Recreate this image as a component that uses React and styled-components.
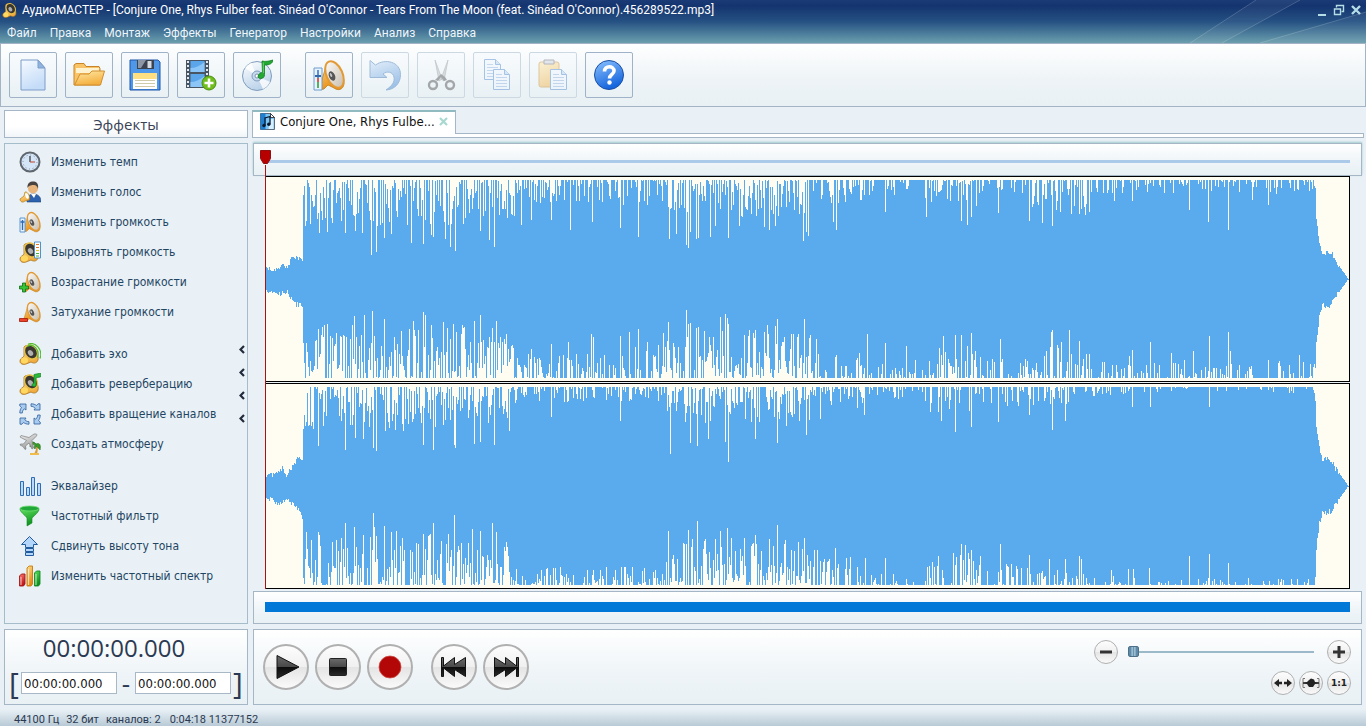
import React, { useState } from 'react';
import styled, { createGlobalStyle } from 'styled-components';

const MENU = ['Файл', 'Правка', 'Монтаж', 'Эффекты', 'Генератор', 'Настройки', 'Анализ', 'Справка'];

const TITLE =
  "АудиоМАСТЕР - [Conjure One, Rhys Fulber feat. Sinéad O'Connor - Tears From The Moon (feat. Sinéad O'Connor).456289522.mp3]";

export default function App() {
  const [zoom, setZoom] = useState(0);

  return (
    <Window>
      <GlobalStyle />
      <SharedDefs />
      <Header>
        <Rays viewBox="0 0 180 43">
          <path d="M4 43 70 0h44L36 43z" fill="#fff" opacity="0.050" />
          <path d="M4 43 70 0M36 43 114 0M74 43 180 12" fill="none" stroke="#fff" opacity="0.180" />
          <path d="M74 43 180 12v31z" fill="#fff" opacity="0.060" />
        </Rays>
        <TitleBar>
          <Small viewBox="0 0 22 22" $size={16}>
            <DarkSpeaker />
          </Small>
          <Title>{TITLE}</Title>
          <WindowButtons />
        </TitleBar>
        <Menu>
          {MENU.map((item) => (
            <MenuItem key={item}>{item}</MenuItem>
          ))}
        </Menu>
      </Header>

      <Toolbar>
        {TOOLS.map(({ label, Icon, disabled, first }) => (
          <ToolButton key={label} aria-label={label} disabled={disabled} $first={first}>
            <svg width="32" height="32" viewBox="0 0 32 32">
              <Icon />
            </svg>
          </ToolButton>
        ))}
      </Toolbar>

      <Body>
        <Sidebar>
          <SidebarTitle>Эффекты</SidebarTitle>
          <EffectsPanel>
            {EFFECTS.map((group) => (
              <EffectGroup key={group[0].label}>
                {group.map(({ label, Icon }) => (
                  <li key={label}>
                    <Effect>
                      <Small viewBox="0 0 22 22" $size={22}>
                        <Icon />
                      </Small>
                      {label}
                    </Effect>
                  </li>
                ))}
              </EffectGroup>
            ))}
            <Collapse aria-label="Свернуть панель">
              {[0, 1, 2, 3].map((i) => (
                <svg key={i} width="6" height="9" viewBox="0 0 6 9">
                  <path d="M5 1 1.5 4.500 5 8" fill="none" stroke="#222a3c" strokeWidth="2.200" />
                </svg>
              ))}
            </Collapse>
          </EffectsPanel>
          <TimePanel>
            <Clock>00:00:00.000</Clock>
            <Range>
              <Bracket>[</Bracket>
              <TimeInput aria-label="Начало выделения" defaultValue="00:00:00.000" />
              <Dash>-</Dash>
              <TimeInput aria-label="Конец выделения" defaultValue="00:00:00.000" />
              <Bracket>]</Bracket>
            </Range>
          </TimePanel>
        </Sidebar>

        <Main>
          <TabBar>
            <Tab>
              <TabIcon />
              Conjure One, Rhys Fulbe...
              <TabClose aria-label="Закрыть">
                <svg width="9" height="9" viewBox="0 0 9 9">
                  <path d="M1 1 8 8M8 1 1 8" stroke="#a9d8d0" strokeWidth="2.200" />
                </svg>
              </TabClose>
            </Tab>
            <TabStrip />
          </TabBar>

          <Editor>
            <Ruler>
              <RulerLine />
            </Ruler>
            <Track channel={CHANNELS[0]} />
            <Track channel={CHANNELS[1]} />
            <Playhead>
              <svg width="11" height="15" viewBox="0 0 11 15">
                <path d="M.5 .5h10v8l-3 5h-4l-3-5z" fill="#b80000" stroke="#8c1010" />
              </svg>
            </Playhead>
          </Editor>

          <ScrollPanel>
            <ScrollBar />
          </ScrollPanel>

          <Controls>
            <Transport>
              {TRANSPORT.map(({ label, Icon, first }) => (
                <RoundButton key={label} aria-label={label} $size={46} $first={first}>
                  <svg width="32" height="32" viewBox="0 0 32 32">
                    <Icon />
                  </svg>
                </RoundButton>
              ))}
            </Transport>
            <ZoomBox>
              <ZoomRow>
                <RoundButton aria-label="Уменьшить" $size={24} onClick={() => setZoom(Math.max(0, zoom - 10))}>
                  <svg width="14" height="14" viewBox="0 0 14 14">
                    <path d="M1 5.500h12v3H1z" fill="#333" />
                  </svg>
                </RoundButton>
                <ZoomSlider
                  type="range"
                  aria-label="Масштаб"
                  value={zoom}
                  onChange={(e) => setZoom(Number(e.target.value))}
                />
                <RoundButton aria-label="Увеличить" $size={24} onClick={() => setZoom(Math.min(100, zoom + 10))}>
                  <svg width="14" height="14" viewBox="0 0 14 14">
                    <path d="M1 5.500h4.500V1h3v4.500H13v3H8.500V13h-3V8.500H1z" fill="#333" />
                  </svg>
                </RoundButton>
              </ZoomRow>
              <ZoomRow $tight>
                <RoundButton aria-label="По ширине" $size={24}>
                  <svg width="18" height="10" viewBox="0 0 18 10">
                    <path d="M0 5 5 1v2.800h3v2.400H5V9zM18 5l-5-4v2.800h-3v2.400h3V9z" fill="#222" />
                  </svg>
                </RoundButton>
                <RoundButton aria-label="Выделение" $size={24}>
                  <svg width="18" height="10" viewBox="0 0 18 10">
                    <path d="M3 .5H1v9h2M15 .5h2v9h-2" fill="none" stroke="#777" />
                    <path d="M1 4.300 5 4l2-2 2-1.500L12 1.500 13 4l4 .300v1.400L13 6l-2 3H7L5 6l-4-.3z" fill="#222" />
                  </svg>
                </RoundButton>
                <RoundButton $size={24}>1:1</RoundButton>
              </ZoomRow>
            </ZoomBox>
          </Controls>
        </Main>
      </Body>

      <StatusBar>
        <span>44100 Гц</span>
        <span>32 бит</span>
        <span>каналов: 2</span>
        <StatusTime>0:04:18 11377152</StatusTime>
      </StatusBar>
    </Window>
  );
}

/* ---------- waveform ---------- */

const LENGTH = 1084;
const PEAK = 99;
const START = 38;
const END = 1050;

// [x, share of columns with a gap, gap depth above, gap depth below]
const DENSITY = [
  [
    [0, 0.78, 46, 54],
    [200, 0.72, 40, 46],
    [250, 0.55, 24, 26],
    [340, 0.55, 28, 34],
    [395, 0.8, 38, 48],
    [545, 0.55, 24, 30],
    [600, 0.35, 16, 18],
    [660, 0.55, 26, 32],
    [715, 0.4, 20, 22],
    [765, 0.6, 34, 34],
    [826, 0.35, 14, 16],
  ],
  [
    [0, 0.78, 44, 54],
    [200, 0.75, 36, 44],
    [245, 0.5, 16, 18],
    [400, 0.78, 36, 48],
    [545, 0.55, 22, 30],
    [600, 0.3, 12, 14],
    [660, 0.55, 26, 34],
    [715, 0.4, 20, 22],
    [805, 0.3, 9, 12],
    [860, 0.25, 6, 7],
  ],
];

const CHANNELS = [
  {
    seed: 17,
    density: DENSITY[0],
    top: {
      lead: [[0, 10], [12, 9], [16, 15], [22, 11], [27, 22], [38, 19]],
      dips: [
        [40, 46], [54, 53], [62, 52], [67, 43], [80, 53], [90, 51], [97, 53], [106, 75], [111, 72], [119, 58],
        [126, 54], [146, 63], [158, 64], [166, 55], [168, 57], [180, 59], [185, 67], [190, 71], [215, 51],
        [224, 60], [229, 67], [256, 45], [266, 40], [286, 40], [305, 50], [327, 42], [355, 48], [373, 57],
        [404, 59], [411, 54], [421, 65], [423, 68], [425, 52], [431, 59], [433, 58], [445, 57], [450, 46],
        [463, 58], [474, 46], [499, 47], [504, 50], [510, 46], [538, 61], [541, 52], [543, 56], [568, 42],
        [571, 50], [620, 32], [661, 37], [696, 41], [702, 45], [706, 37], [733, 33], [764, 41], [777, 43],
        [787, 46], [806, 34], [820, 35], [824, 32], [849, 21], [867, 21], [924, 30], [943, 42], [963, 50],
        [987, 20], [1003, 25],
      ],
    },
    bottom: {
      lead: [[0, 12], [14, 14], [22, 12], [28, 24], [38, 27]],
      dips: [
        [53, 49], [57, 51], [89, 62], [99, 63], [107, 67], [119, 59], [148, 57], [158, 66], [160, 63],
        [178, 56], [188, 54], [197, 53], [209, 57], [215, 63], [231, 57], [227, 50], [241, 44], [266, 29],
        [286, 34], [303, 36], [326, 44], [328, 41], [355, 42], [364, 46], [373, 49], [382, 36], [403, 56],
        [421, 68], [423, 54], [425, 55], [431, 50], [433, 51], [455, 61], [460, 64], [462, 60], [463, 54],
        [479, 43], [484, 48], [490, 48], [499, 46], [502, 53], [510, 52], [512, 59], [519, 41], [533, 44],
        [539, 59], [545, 43], [551, 39], [602, 44], [620, 35], [641, 32], [678, 42], [690, 43], [696, 43],
        [706, 45], [735, 39], [786, 46], [787, 48], [796, 36], [804, 48], [814, 37], [864, 22], [867, 28],
        [885, 36], [906, 25], [919, 18], [928, 27], [944, 42], [963, 46], [965, 27], [1003, 18], [1014, 17],
        [1034, 23],
      ],
    },
  },
  {
    seed: 91,
    density: DENSITY[1],
    top: {
      lead: [[0, 10], [10, 12], [17, 17], [21, 11], [30, 23], [34, 29], [38, 26]],
      dips: [
        [40, 39], [53, 59], [80, 63], [90, 51], [98, 52], [108, 61], [111, 64], [158, 58], [168, 63],
        [189, 58], [190, 61], [209, 57], [215, 55], [229, 58], [244, 44], [286, 30], [355, 34], [405, 67],
        [425, 56], [432, 59], [443, 52], [460, 55], [463, 75], [490, 52], [512, 56], [521, 39], [541, 48],
        [555, 32], [599, 28], [676, 34], [690, 45], [706, 40], [733, 35], [764, 28], [787, 43], [800, 34],
        [867, 20], [885, 20], [944, 20],
      ],
    },
    bottom: {
      lead: [[0, 10], [14, 18], [22, 13], [30, 20], [36, 27], [38, 36]],
      dips: [
        [53, 53], [54, 50], [67, 43], [80, 62], [89, 58], [98, 50], [108, 72], [109, 58], [119, 59],
        [131, 54], [158, 51], [168, 62], [183, 51], [189, 70], [207, 56], [215, 54], [227, 62], [231, 53],
        [241, 43], [403, 54], [423, 55], [432, 64], [440, 46], [455, 54], [462, 57], [479, 47], [490, 50],
        [512, 60], [519, 41], [539, 47], [549, 35], [552, 35], [570, 37], [600, 27], [620, 27], [673, 29],
        [696, 41], [700, 40], [706, 35], [715, 29], [735, 41], [764, 30], [784, 26], [800, 26], [814, 29],
        [816, 26], [846, 15], [863, 16], [868, 16], [884, 17], [924, 29], [944, 31], [963, 22],
      ],
    },
  },
];

const TAIL = [[1050, 88], [1051, 62], [1054, 38], [1057, 27], [1066, 26], [1070, 18], [1078, 7], [1083, 0]];

function random(seed) {
  let state = seed;
  return () => {
    state = (state * 16807) % 2147483647;
    return state / 2147483647;
  };
}

function interpolate(points, x) {
  const next = points.findIndex(([px]) => px >= x);
  if (next < 0) return points[points.length - 1][1];
  if (next === 0) return points[0][1];
  const [x0, y0] = points[next - 1];
  const [x1, y1] = points[next];
  return y0 + ((y1 - y0) * (x - x0)) / (x1 - x0);
}

function levels({ lead, dips }, density, column, next) {
  const deep = new Map(dips);
  return Array.from({ length: LENGTH }, (_, x) => {
    const r = next();
    const depth = next();
    if (x < START) return Math.round(interpolate(lead, x) + r * 5 - 2);
    if (x >= END) return Math.round(interpolate(TAIL, x) + (x < 1074 ? r * 6 - 3 : 0));
    if (deep.has(x)) return PEAK - deep.get(x);
    const zone = density.filter(([from]) => from <= x).pop();
    return r < zone[1] ? PEAK - Math.round(depth ** 1.4 * zone[column]) : PEAK;
  });
}

function wavePath({ seed, density, top, bottom }) {
  const next = random(seed * 7919);
  const up = levels(top, density, 2, next);
  const down = levels(bottom, density, 3, next);
  return up.map((h, x) => `M${x} ${PEAK - h}h1v${Math.max(1, h + down[x])}h-1z`).join('');
}

function Track({ channel }) {
  return (
    <TrackBox>
      <Wave viewBox={`0 0 ${LENGTH} ${PEAK * 2}`} preserveAspectRatio="none" shapeRendering="crispEdges">
        <path d={wavePath(channel)} fill="#5aabee" />
      </Wave>
    </TrackBox>
  );
}

/* ---------- icons ---------- */

const GRADIENTS = {
  gPaper: ['#f6faff', '#c4dcf8'],
  gGold: ['#fff0a8', '#f0a93c'],
  gFolder: ['#ffe9a6', '#f4b040'],
  gCone: ['#ffffff', '#cfc6b8'],
  gGreen: ['#5fe05f', '#0b8f1c'],
  gDisc: ['#ffffff', '#bcd3ea'],
  gUndo: ['#cfe3f8', '#3f86d6'],
  gHelp: ['#8cc2ff', '#1566dd'],
  gRed: ['#ff7a70', '#c01414'],
  gOrange: ['#ffe08a', '#e88a10'],
  gMetal: ['#f2f2f2', '#9a9a9a'],
};

function SharedDefs() {
  return (
    <DefsSvg aria-hidden="true">
      <defs>
        {Object.entries(GRADIENTS).map(([id, [from, to]]) => (
          <linearGradient key={id} id={id} x1="0" y1="0" x2="0.400" y2="1">
            <stop offset="0" stopColor={from} />
            <stop offset="1" stopColor={to} />
          </linearGradient>
        ))}
        <linearGradient id="gGlyph" x1="0" y1="0" x2="0" y2="1">
          <stop offset="0" stopColor="#6a6a6a" />
          <stop offset="0.500" stopColor="#484848" />
          <stop offset="0.520" stopColor="#0c0c0c" />
          <stop offset="1" stopColor="#2a2a2a" />
        </linearGradient>
      </defs>
    </DefsSvg>
  );
}

const NewIcon = () => (
  <>
    <path d="M4 1h17l7 8v22H4z" fill="url(#gPaper)" stroke="#7d9cc8" />
    <path d="M21 1v8h7z" fill="#8fb4e0" stroke="#7d9cc8" strokeLinejoin="round" />
  </>
);

const OpenIcon = () => (
  <>
    <path d="M1 26V6l2-1.500h8l2 3h13l1 2V26z" fill="#f9c468" stroke="#c98328" />
    <path d="M3 9h23v5H3z" fill="#fff3cf" />
    <path d="M1.500 26 7 15h9l3-3h12.500l-4 14z" fill="url(#gFolder)" stroke="#d18e2e" strokeLinejoin="round" />
  </>
);

const SaveIcon = () => (
  <>
    <path d="M1 1h28l2 2v28H1z" fill="#4f97e8" stroke="#1c55a8" />
    <path d="M8 1h17v9H8z" fill="#3b4250" />
    <path d="M9 1h8l-5 8H9z" fill="#8c96a4" />
    <path d="M18.500 2h4v7h-4z" fill="#d6dbe2" />
    <path d="M4 14h24v16H4z" fill="#fff" />
    <path d="M4 14h24v6H4z" fill="#ffdf80" />
    <path d="M6 21.500h20M6 24.500h20M6 27.500h20" stroke="#cfcaa8" />
  </>
);

const FilmIcon = () => (
  <>
    <path d="M1 1h23v28H1z" fill="#4a5563" />
    <path d="M3 2v26M22 2v26" stroke="#e3e9f0" strokeWidth="2" strokeDasharray="2 2" />
    <path d="M5.500 2h14v11h-14zM5.500 15h14v13h-14z" fill="#5ba6ea" />
    <path d="M5.500 9c5 0 9-2 14-6v10h-14zM5.500 23c5 0 9-2 14-6v11h-14z" fill="#8cc6f8" />
    <circle cx="24" cy="24" r="7" fill="#6fbe1c" stroke="#4b8f12" />
    <path d="M24 19.500v9M19.500 24h9" stroke="#fff" strokeWidth="2.600" />
  </>
);

const DiscIcon = () => (
  <>
    <circle cx="16" cy="17" r="14.500" fill="url(#gDisc)" stroke="#7f9dbd" />
    <path d="M16 17 4 9a14 14 0 0 1 6-5zM16 17l13 6a14 14 0 0 1-7 7z" fill="#fff" opacity="0.800" />
    <circle cx="16" cy="17" r="5" fill="#c4d8ee" stroke="#7f9dbd" />
    <circle cx="16" cy="17" r="2" fill="#fff" stroke="#7f93ad" />
    <path
      d="M21 2c3 .8 7 .3 11-1-.5 3.500-3 5-8.500 5v9.500c0 3-2 4-4 4-2.200 0-3-1.500-2-3.500s3-2.500 4-2.500z"
      fill="#23a834"
      stroke="#0c7d1e"
      strokeWidth="0.800"
    />
    <path d="M22.300 3.500V14" stroke="#7be37b" strokeWidth="0.800" />
  </>
);

// Light cone speaker on a 32 grid
const Cone = () => (
  <>
    <path d="M7 27 11 14l3-10c4-5 18 10 17 21-1 6-6 7-10 4l-6-3-4 4c-3 1-5-1-4-3z" fill="url(#gOrange)" stroke="#c07f1c" strokeWidth="0.800" />
    <ellipse
      cx="21.500"
      cy="15.500"
      rx="8"
      ry="14"
      transform="rotate(-24 21.500 15.500)"
      fill="url(#gCone)"
      stroke="#e39a35"
      strokeWidth="2"
    />
    <ellipse cx="19" cy="17" rx="3" ry="5" transform="rotate(-24 19 17)" fill="#565656" />
    <ellipse cx="18" cy="16" rx="1" ry="2.200" transform="rotate(-24 18 16)" fill="#c4c4c4" />
  </>
);

const VolumeIcon = () => (
  <>
    <Cone />
    <path d="M1 9h8v22H1z" fill="#e8f3ff" stroke="#6f9ccc" />
    <path d="M5 11v8" stroke="#3b78c8" strokeWidth="1.600" />
    <path d="M5 19v4" stroke="#d43a1e" strokeWidth="1.600" />
    <path d="M5 23v6" stroke="#35a032" strokeWidth="1.600" />
    <path d="M2 17h6" stroke="#3468a8" strokeWidth="2" />
  </>
);

const UndoIcon = () => (
  <path
    d="M1 1.500 6.500 6c10-7 25-3 25 9.500 0 9-6 15-14.500 15.500 6-4 9-8 8-13-1-5-7-6.500-11-3l4 3.500H1z"
    fill="url(#gUndo)"
    stroke="#3c74b4"
  />
);

const CutIcon = () => (
  <>
    <path d="M10 1l7 19-3 2zM23 1l-7 19 3 2z" fill="#b9bec4" stroke="#777" strokeWidth="0.600" />
    <path d="M13 18l3-3 4 3 2 3-3 1-3-4-3 4-3-1z" fill="#4c4c4c" />
    <circle cx="8" cy="26" r="4" fill="none" stroke="#4c4c4c" strokeWidth="2.400" />
    <circle cx="25" cy="26" r="4" fill="none" stroke="#4c4c4c" strokeWidth="2.400" />
  </>
);

const Sheet = ({ x, y }) => (
  <g transform={`translate(${x} ${y})`}>
    <path d="M.5 .5h11l5 5v15H.5z" fill="#f0f7ff" stroke="#4a86cc" />
    <path d="M11.500 .5v5h5" fill="#b8d4f2" stroke="#4a86cc" />
    <path d="M3 5.500h6M3 8.500h11M3 11.500h11M3 14.500h11M3 17.500h11" stroke="#8bb2e0" />
  </g>
);

const CopyIcon = () => (
  <>
    <Sheet x={3} y={0} />
    <Sheet x={12} y={10} />
  </>
);

const PasteIcon = () => (
  <>
    <rect x="2" y="3" width="20" height="25" rx="2" fill="url(#gFolder)" stroke="#c98a30" />
    <path d="M7 5V1h10v4z" fill="#ccd2da" stroke="#667" />
    <Sheet x={13} y={10} />
  </>
);

const HelpIcon = () => (
  <>
    <circle cx="16" cy="16" r="14.500" fill="url(#gHelp)" stroke="#1a4fa6" />
    <path d="M11.500 12.500c0-6.500 9.500-6 9.500-.5 0 3.500-4.500 3.500-4.500 7.500" fill="none" stroke="#fff" strokeWidth="3.600" />
    <circle cx="16.500" cy="23.500" r="2.200" fill="#fff" />
  </>
);

const TOOLS = [
  { label: 'Создать', Icon: NewIcon },
  { label: 'Открыть', Icon: OpenIcon },
  { label: 'Сохранить', Icon: SaveIcon },
  { label: 'Звук из видео', Icon: FilmIcon },
  { label: 'Звук с диска', Icon: DiscIcon },
  { label: 'Громкость', Icon: VolumeIcon, first: true },
  { label: 'Отменить', Icon: UndoIcon, disabled: true },
  { label: 'Вырезать', Icon: CutIcon, disabled: true },
  { label: 'Копировать', Icon: CopyIcon, disabled: true },
  { label: 'Вставить', Icon: PasteIcon, disabled: true },
  { label: 'Помощь', Icon: HelpIcon },
];

const ClockIcon = () => (
  <>
    <circle cx="11" cy="11" r="9.500" fill="#d5e5f8" stroke="#5f666e" strokeWidth="2" />
    <circle cx="11" cy="11" r="7" fill="none" stroke="#7e8b99" strokeDasharray="1 2.660" />
    <path d="M11 5v6" stroke="#333" strokeWidth="1.200" />
    <path d="M11 11h5" stroke="#c55a4a" strokeWidth="1.200" />
  </>
);

const VoiceIcon = () => (
  <>
    <path d="M8 21c0-6 3-8 6-8s8 1 8 8z" fill="#2d62ae" stroke="#1f4680" strokeWidth="0.600" />
    <path d="M12 13h5l-2 4z" fill="#fff" />
    <circle cx="14" cy="7.500" r="5" fill="#e9b47c" />
    <path d="M8.500 7C8 2 11 .5 14 .5S20 2 19 8c-1-3-2-4-4-4s-5 0-6.500 3z" fill="#4a4340" />
    <path d="M1 18l4-3 1-4c3-1 6 6 4 8l-4 1c-2 2-5 1-5-2z" fill="url(#gGold)" stroke="#b07a1e" strokeWidth="0.700" />
    <ellipse cx="8" cy="15" rx="1.500" ry="3" transform="rotate(-25 8 15)" fill="#fff" />
  </>
);

const SmallCone = () => (
  <g transform="scale(0.680)">
    <Cone />
  </g>
);

const SmallVolume = () => (
  <>
    <SmallCone />
    <path d="M1 7h5v14H1z" fill="#e8f3ff" stroke="#5c96cf" />
    <path d="M3.500 9v10M1.500 11h4" stroke="#2f6cb4" strokeWidth="1.400" />
  </>
);

const DarkSpeaker = () => (
  <>
    <path d="M1 18c0-3 3-3 4-5L5 4c3-5 16 4 14 13-1 3-4 4-7 2l-5 2c-3 1-6 0-6-3z" fill="url(#gGold)" stroke="#a8741a" strokeWidth="0.800" />
    <ellipse cx="12" cy="9" rx="6" ry="7.500" transform="rotate(-35 12 9)" fill="#3a3630" stroke="#e8c14a" strokeWidth="1.400" />
    <ellipse cx="11.500" cy="10" rx="2.400" ry="3.200" transform="rotate(-35 11.500 10)" fill="#b0b0b0" />
    <ellipse cx="5.500" cy="17.500" rx="3.500" ry="3" fill="#ffd860" />
  </>
);

const LevelIcon = () => (
  <>
    <DarkSpeaker />
    <path d="M15.500 1h6v16h-6z" fill="#fff" stroke="#4f93cc" />
    <path d="M17 3.500h3M17 6.500h3" stroke="#e07828" strokeWidth="1.200" />
    <path d="M17 9.500h3" stroke="#e8c428" strokeWidth="1.200" />
    <path d="M17 12.500h3M17 15h3" stroke="#4cae3c" strokeWidth="1.200" />
  </>
);

const FadeInIcon = () => (
  <>
    <SmallCone />
    <path d="M3.500 12h3v3h3v3h-3v3h-3v-3h-3v-3h3z" fill="#37c237" stroke="#0e6f14" strokeWidth="0.800" />
  </>
);

const FadeOutIcon = () => (
  <>
    <SmallCone />
    <path d="M.5 17.500h8v3h-8z" fill="#f04028" stroke="#a01808" strokeWidth="0.800" />
  </>
);

const EchoIcon = () => (
  <>
    <DarkSpeaker />
    <path d="M8 3.500c7-4 13 4 10.500 11M9 1.200c8-3 15 6 12 14.300" fill="none" stroke="#55bb33" strokeWidth="1.200" />
  </>
);

const ReverbIcon = () => (
  <>
    <DarkSpeaker />
    <path d="M15 1.500 21.500 0v4l-4.500.8V12c0 2-4 2-4 0 0-1.500 2-1.800 2-1.800z" fill="#2cb83c" stroke="#0b7a1c" strokeWidth="0.600" />
  </>
);

const TURN = 'M.8 10c0-2.500.6-4 1.700-5.500L.8 3V1H7v6L5.200 5.800C4 7 3.300 8.500 3.300 10z';

const RotateIcon = () => (
  <g fill="#a9cbf0" stroke="#2d5f9c" strokeWidth="0.800">
    {[0, 90, 180, 270].map((angle) => (
      <path key={angle} d={TURN} transform={`rotate(${angle} 11 11)`} />
    ))}
  </g>
);

const AtmosphereIcon = () => (
  <>
    <path d="M16 11c2 3 1 7-1 10h3c1-4 1-7 0-10z" fill="#d89a3c" />
    <path d="M11 21h9" stroke="#f0bc4c" strokeWidth="2" />
    <path d="M17 11c-3-4-6-1-6 3 2-2 3-3 5-2-1 2-1 3 0 4 1-3 2-3 3-1 1 1 2 1 2 2 1-4 0-8-4-6z" fill="#3a9a28" stroke="#1c6c14" strokeWidth="0.600" />
    <path
      d="M17 1c1 0 1 1 .5 2L13 7.500 14.500 15 13 16l-3-6-3.500 3 .5 3-1 .5-2-3-3-1.500.5-1h3l3-3.500L1 4l1-1.500 8 2L15 1z"
      fill="url(#gMetal)"
      stroke="#7e7e7e"
      strokeWidth="0.700"
    />
  </>
);

const EqualizerIcon = () => (
  <g fill="#b9dafa" stroke="#2f6cb4">
    <path d="M1.500 6.500h3v14h-3zM7.500 12.500h3v8h-3zM12.500 2.500h3v18h-3zM18.500 8.500h3v12h-3z" />
  </g>
);

const FilterIcon = () => (
  <>
    <path d="M1 4c0 3 5 6 7 9v8l5-3v-5c3-3 7-6 7-9z" fill="url(#gGreen)" stroke="#168a28" strokeWidth="0.600" />
    <ellipse cx="10.500" cy="3.500" rx="9.500" ry="2.500" fill="#1fa838" stroke="#6fdc74" strokeWidth="0.800" />
  </>
);

const PitchIcon = () => (
  <g fill="#b4d6fa" stroke="#235c9c" strokeLinejoin="round">
    <path d="M10.500 1.500 18.500 9.500h-4v3h-8v-3h-4z" />
    <path d="M6.500 13.500h8v3h-8zM6.500 17.500h8v3h-8z" />
  </g>
);

const Pillar = ({ x, y, fill, dark }) => (
  <>
    <path d={`M${x} ${y + 2}l2-2h3.500v${19 - y}l-1.500 2H${x}z`} fill={fill} stroke={dark} strokeWidth="0.900" strokeLinejoin="round" />
    <path d={`M${x + 1.5} ${y + 3}V20`} stroke="#fff" strokeWidth="1.200" opacity="0.600" />
  </>
);

const SpectrumIcon = () => (
  <>
    <Pillar x={0.5} y={9} fill="url(#gRed)" dark="#a01818" />
    <Pillar x={8} y={1} fill="url(#gOrange)" dark="#c47a10" />
    <Pillar x={15.5} y={6} fill="url(#gGreen)" dark="#168a28" />
  </>
);

const EFFECTS = [
  [
    { label: 'Изменить темп', Icon: ClockIcon },
    { label: 'Изменить голос', Icon: VoiceIcon },
    { label: 'Изменить громкость', Icon: SmallVolume },
    { label: 'Выровнять громкость', Icon: LevelIcon },
    { label: 'Возрастание громкости', Icon: FadeInIcon },
    { label: 'Затухание громкости', Icon: FadeOutIcon },
  ],
  [
    { label: 'Добавить эхо', Icon: EchoIcon },
    { label: 'Добавить реверберацию', Icon: ReverbIcon },
    { label: 'Добавить вращение каналов', Icon: RotateIcon },
    { label: 'Создать атмосферу', Icon: AtmosphereIcon },
  ],
  [
    { label: 'Эквалайзер', Icon: EqualizerIcon },
    { label: 'Частотный фильтр', Icon: FilterIcon },
    { label: 'Сдвинуть высоту тона', Icon: PitchIcon },
    { label: 'Изменить частотный спектр', Icon: SpectrumIcon },
  ],
];

const PlayIcon = () => <path d="M7 4.500 29 16 7 27.500z" fill="url(#gGlyph)" stroke="#111" />;

const StopIcon = () => <rect x="7.500" y="7.500" width="17" height="17" rx="1" fill="url(#gGlyph)" stroke="#222" />;

const RecordIcon = () => <circle cx="16" cy="16" r="11" fill="#b30606" stroke="#cc4a42" strokeWidth="0.800" />;

const PrevIcon = () => (
  <path d="M3.500 6.500h2v8.500L16.500 6.500v7l11-7v19l-11-7v7L5.500 17v8.500h-2z" fill="url(#gGlyph)" stroke="#111" />
);

const NextIcon = () => (
  <path d="M28.500 6.500h-2v8.500L15.500 6.500v7l-11-7v19l11-7v7l11-8.500v8.500h2z" fill="url(#gGlyph)" stroke="#111" />
);

const TRANSPORT = [
  { label: 'Воспроизвести', Icon: PlayIcon },
  { label: 'Стоп', Icon: StopIcon },
  { label: 'Запись', Icon: RecordIcon },
  { label: 'В начало', Icon: PrevIcon, first: true },
  { label: 'В конец', Icon: NextIcon },
];

const TabIcon = () => (
  <svg width="15" height="17" viewBox="0 0 15 17">
    <path d="M.5.5h10l4 4v12H.5z" fill="#7cc4f4" stroke="#5a6b7c" />
    <path d="M.5.5h5v16h-5z" fill="#1f7fd0" />
    <path d="M10.500 6h3v10h-5z" fill="#d8efff" />
    <path d="M10.500.5v4h4z" fill="#fff" stroke="#222" strokeWidth="0.800" />
    <path d="M5 12.500V5l5-1.500V11" fill="none" stroke="#0a1a30" strokeWidth="1.300" />
    <circle cx="4" cy="12.500" r="1.700" fill="#0a1a30" />
    <circle cx="8.800" cy="11.200" r="1.700" fill="#0a1a30" />
  </svg>
);

function WindowButtons() {
  return (
    <>
      <WindowButton aria-label="Свернуть">
        <svg width="12" height="12" viewBox="0 0 12 12">
          <path d="M2 10h8v2H2z" fill="#b5dde6" />
        </svg>
      </WindowButton>
      <WindowButton aria-label="Восстановить">
        <svg width="12" height="12" viewBox="0 0 12 12">
          <path d="M3.500 3.500V1.500h7v6h-2" fill="none" stroke="#b5dde6" strokeWidth="1.400" />
          <path d="M1.500 5h6v5.500h-6z" fill="none" stroke="#b5dde6" strokeWidth="1.400" />
        </svg>
      </WindowButton>
      <WindowButton aria-label="Закрыть окно">
        <svg width="12" height="12" viewBox="0 0 12 12">
          <path d="M2 2l8 8M10 2l-8 8" stroke="#b5dde6" strokeWidth="2.400" />
        </svg>
      </WindowButton>
    </>
  );
}

/* ---------- styles ---------- */

const GlobalStyle = createGlobalStyle`
  *, *::before, *::after {
    box-sizing: border-box;
  }

  body {
    margin: 0;
    font-family: Roboto, 'Open Sans', sans-serif;
    font-size: 12px;
    color: #2b3a52;
  }

  button {
    appearance: none;
    margin: 0;
    padding: 0;
    border: 0;
    background: none;
    font: inherit;
    color: inherit;
  }

  svg {
    display: block;
    flex: none;
  }
`;

const Window = styled.div`
  display: flex;
  flex-direction: column;
  min-height: 100vh;
  background: #e9f1f6;
`;

const DefsSvg = styled.svg`
  position: absolute;
  width: 0;
  height: 0;
`;

const Small = styled.svg`
  width: ${({ $size }) => $size}px;
  height: ${({ $size }) => $size}px;
`;

const Header = styled.header`
  position: relative;
  display: flex;
  flex-direction: column;
  height: 43px;
  background: linear-gradient(#1a3b75, #14346f 14%, #255183 50%, #6b9fae);
  color: #fff;
`;

const Rays = styled.svg`
  position: absolute;
  top: 0;
  right: 0;
  width: 180px;
  height: 43px;
`;

const TitleBar = styled.div`
  position: relative;
  display: flex;
  align-items: center;
  height: 19px;
  padding: 0 4px 0 2px;
`;

const Title = styled.div`
  flex: 1;
  min-width: 0;
  margin-left: 4px;
  overflow: hidden;
  white-space: nowrap;
  text-overflow: ellipsis;
`;

const WindowButton = styled.button`
  margin-left: 5px;
`;

const Menu = styled.nav`
  display: flex;
  align-items: center;
  gap: 13px;
  height: 24px;
  padding: 3px 7px 0;
`;

const MenuItem = styled.button`
  color: #eef6fa;
`;

const Toolbar = styled.div`
  display: flex;
  align-items: center;
  gap: 8px;
  height: 64px;
  padding: 0 8px;
  border: 1px solid #a5b3c6;
  background: linear-gradient(#fff, #edf3f6 60%, #e9f1f5);
`;

const ToolButton = styled.button`
  display: flex;
  align-items: center;
  justify-content: center;
  width: 48px;
  height: 46px;
  margin-left: ${({ $first }) => ($first ? '16px' : 0)};
  border: 1px solid #9fb2c8;
  border-radius: 2px;
  background: linear-gradient(#f8fbfd, #e9f1f5);

  &:disabled {
    border-color: #ccd8e2;
  }

  &:disabled svg {
    opacity: 0.45;
  }
`;

const Body = styled.div`
  flex: 1;
  display: grid;
  grid-template-columns: 244px minmax(0, 1fr);
  gap: 5px;
  padding: 3px 4px 0;
`;

const Sidebar = styled.aside`
  display: flex;
  flex-direction: column;
  gap: 5px;
`;

const Panel = styled.div`
  border: 1px solid #a5b6c6;
  background: linear-gradient(#fff, #eef4f7 60%, #e9f1f5);
`;

const SidebarTitle = styled.h2`
  display: flex;
  align-items: center;
  justify-content: center;
  height: 28px;
  margin: 0;
  border: 1px solid #a5b6c6;
  background: linear-gradient(#fff 60%, #f1f5f8);
  font-family: 'Open Sans', 'Noto Sans', sans-serif;
  font-size: 15px;
  font-weight: 400;
  color: #3a4356;
`;

const EffectsPanel = styled.div`
  position: relative;
  flex: 1;
  display: flex;
  flex-direction: column;
  gap: 12px;
  padding: 3px 14px 0;
  border: 1px solid #a5bccb;
  background: #e9f1f6;
`;

const EffectGroup = styled.ul`
  margin: 0;
  padding: 0;
  list-style: none;
`;

const Effect = styled.button`
  display: flex;
  align-items: center;
  gap: 10px;
  height: 30px;
  font-family: 'DejaVu Sans Condensed', 'DejaVu Sans', sans-serif;
  font-size: 12px;
  white-space: nowrap;
  color: #1f4563;
`;

const Collapse = styled.button`
  position: absolute;
  top: 50%;
  right: 2px;
  display: flex;
  flex-direction: column;
  gap: 14px;
  transform: translateY(-50%);
`;

const TimePanel = styled(Panel)`
  height: 76px;
  padding: 0 5px;
`;

const Clock = styled.div`
  padding-right: 24px;
  text-align: center;
  font-family: 'Open Sans', 'Noto Sans', sans-serif;
  font-size: 24px;
  line-height: 36px;
`;

const Range = styled.div`
  display: flex;
  align-items: center;
  gap: 3px;
  height: 34px;
`;

const Bracket = styled.span`
  display: flex;
  justify-content: center;
  width: 8px;
  font-family: 'Open Sans', 'Noto Sans', sans-serif;
  font-size: 30px;
  line-height: 30px;
`;

const Dash = styled(Bracket)`
  width: 12px;
  font-size: 26px;
`;

const TimeInput = styled.input`
  width: 96px;
  height: 22px;
  padding: 0 2px;
  border: 1px solid #a9b8c6;
  background: #fff;
  font-family: 'DejaVu Sans Condensed', 'DejaVu Sans', sans-serif;
  font-size: 13px;
  color: #111;
`;

const Main = styled.main`
  display: flex;
  flex-direction: column;
  min-width: 0;
`;

const TabBar = styled.div`
  display: flex;
  flex-direction: column;
  align-items: flex-start;
  height: 28px;
  margin: 0 -2px 5px -1px;
`;

const Tab = styled.div`
  position: relative;
  display: flex;
  align-items: center;
  width: 204px;
  height: 24px;
  margin-bottom: -1px;
  padding: 0 7px 3px;
  border: 1px solid #a5b6c6;
  border-width: 2px 1px 0;
  border-top-color: #8fbac0;
  background: #fff;
  font-family: 'DejaVu Sans Condensed', 'DejaVu Sans', sans-serif;
  font-size: 13px;
  color: #111;
  white-space: nowrap;

  svg {
    margin-right: 5px;
  }
`;

const TabClose = styled.button`
  margin-left: auto;

  svg {
    margin: 0;
  }
`;

const TabStrip = styled.div`
  width: 100%;
  height: 5px;
  border: 1px solid #a5b6c6;
  background: #fff;
`;

const Editor = styled.div`
  position: relative;
  flex: 1;
  display: flex;
  flex-direction: column;
  margin-bottom: 2px;
`;

const Ruler = styled(Panel)`
  height: 33px;
  padding: 16px 11px 0;
  box-shadow: 0 -1px 2px #9fc9cc;
`;

const RulerLine = styled.div`
  height: 3px;
  background: #abc9e8;
`;

const TrackBox = styled.div`
  flex: 1;
  display: flex;
  flex-direction: column;
  min-height: 120px;
  margin: 0 12px;
  padding: 3px 0;
  border: 1px solid #000;
  border-left: 0;
  background: #fffcf1;

  & + & {
    margin-top: 1px;
  }
`;

const Wave = styled.svg`
  flex: 1 1 0;
  width: 100%;
  height: 0;
  min-height: 0;
`;

const Playhead = styled.div`
  position: absolute;
  top: 7px;
  bottom: 0;
  left: 7px;
  display: flex;
  flex-direction: column;
  align-items: center;
  width: 11px;

  &::after {
    content: '';
    flex: 1;
    width: 1px;
    background: #a81414;
  }
`;

const ScrollPanel = styled(Panel)`
  height: 33px;
  margin-bottom: 5px;
  padding: 10px 11px;
`;

const ScrollBar = styled.div`
  height: 10px;
  background: #0078d7;
`;

const Controls = styled(Panel)`
  display: flex;
  align-items: center;
  justify-content: space-between;
  height: 76px;
  padding: 0 10px 0 9px;
`;

const Transport = styled.div`
  display: flex;
  gap: 6px;
`;

const RoundButton = styled.button`
  display: flex;
  align-items: center;
  justify-content: center;
  width: ${({ $size }) => $size}px;
  height: ${({ $size }) => $size}px;
  margin-left: ${({ $first }) => ($first ? '12px' : 0)};
  border: ${({ $size }) => ($size > 30 ? '2px' : '1px')} solid #b0b0b0;
  border-radius: 50%;
  background: linear-gradient(#fdfdfd, #f0f0f0 50%, #e4e4e4 51%, #fafafa);
  font-family: 'DejaVu Sans', sans-serif;
  font-size: 9px;
  font-weight: 700;
  color: #222;
`;

const ZoomBox = styled.div`
  display: flex;
  flex-direction: column;
  align-items: flex-end;
  gap: 7px;
`;

const ZoomRow = styled.div`
  display: flex;
  align-items: center;
  gap: ${({ $tight }) => ($tight ? '4px' : '10px')};
`;

const ZoomSlider = styled.input`
  appearance: none;
  width: 186px;
  height: 12px;
  margin: 0 3px 0 0;
  background: linear-gradient(#9cb9c9, #9cb9c9) center / 100% 2px no-repeat;

  &::-webkit-slider-thumb {
    appearance: none;
    width: 11px;
    height: 11px;
    border: 1px solid #4d7089;
    border-radius: 2px;
    background: linear-gradient(90deg, #5f8aa8 20%, #a9cbdd 35%, #6a93ae 50%, #a9cbdd 65%, #5f8aa8 80%);
  }
`;

const StatusBar = styled.footer`
  display: flex;
  align-items: flex-end;
  gap: 7px;
  height: 21px;
  padding: 0 14px;
  background: linear-gradient(#e9f1f6 20%, #b9cad6);
  font-size: 11px;
  line-height: 13px;
`;

const StatusTime = styled.span`
  margin-left: 2px;
`;
